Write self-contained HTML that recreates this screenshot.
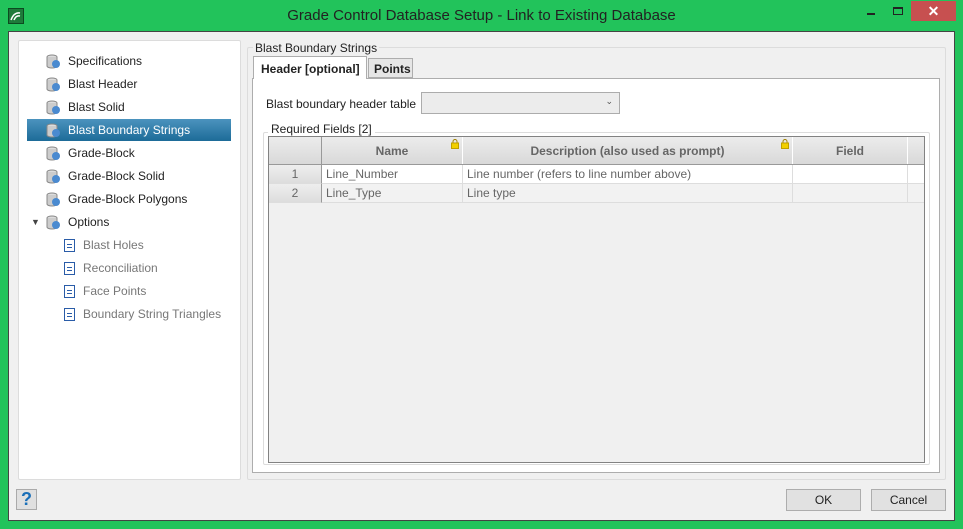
<!DOCTYPE html>
<html><head><style>
*{box-sizing:border-box}
body{margin:0;width:963px;height:529px;background:#22c35b;font-family:"Liberation Sans",sans-serif;font-size:12px;color:#222;position:relative;overflow:hidden}
.a{position:absolute}
.client{left:8px;top:31px;width:947px;height:490px;background:#f0f0f0;border:1px solid #444}
.title{left:0;top:7px;width:963px;text-align:center;font-size:15px;color:#222}
.item{position:absolute;left:27px;width:204px;height:22px;line-height:22px;padding-left:41px;font-size:12px}
.db{position:absolute;left:19px;top:4px;width:15px;height:15px}
.doc{position:absolute;left:37px;top:5px;width:11px;height:13px;border:1px solid #2a5ca8;background:#fff;
 background-image:repeating-linear-gradient(#fff 0 2px,#2a5ca8 2px 3px);background-size:5px 8px;background-position:2px 2px;background-repeat:no-repeat}
.sub{color:#777;padding-left:56px}
.hd{position:absolute;top:0;height:28px;line-height:28px;text-align:center;font-weight:bold;color:#666;background:linear-gradient(#ececec,#d8d8d8);border-right:1px solid #fff}
.cell{position:absolute;height:19px;line-height:19px;padding-left:4px;color:#666;border-right:1px solid #ddd;border-bottom:1px solid #ddd}
.btn{height:22px;background:#e1e1e1;border:1px solid #adadad;text-align:center;line-height:20px}
.lk{position:absolute;right:3px;top:2px}
</style></head><body>
<div class="a" style="left:8px;top:8px;width:16px;height:16px;background:#1e7a3a;border:1px solid #0c4a20"><svg width="14" height="14"><path d="M2 11 Q5 3 11 4 M5 11 Q7 6 11 7" stroke="#fff" fill="none" stroke-width="1.5"/></svg></div>
<div class="a title">Grade Control Database Setup - Link to Existing Database</div>
<div class="a" style="left:867px;top:13px;width:8px;height:2px;background:#222"></div>
<div class="a" style="left:893px;top:7px;width:10px;height:8px;border:1px solid #222;border-top-width:2px"></div>
<div class="a" style="left:911px;top:1px;width:45px;height:20px;background:#c75050;color:#fff;text-align:center;line-height:20px;font-weight:bold;font-size:14px">✕</div>
<div class="a client"></div>
<div class="a" style="left:18px;top:40px;width:223px;height:440px;background:#fff;border:1px solid #dcdcdc;border-radius:2px"></div>
<div class="item" style="top:50px"><svg class="db" viewBox="0 0 15 15"><ellipse cx="6" cy="3" rx="5" ry="2" fill="#ddd" stroke="#888"/><path d="M1 3v9c0 1 2 2 5 2s5-1 5-2V3" fill="#ccc" stroke="#888"/><circle cx="10" cy="10" r="4" fill="#4a8ad0"/></svg>Specifications</div>
<div class="item" style="top:73px"><svg class="db" viewBox="0 0 15 15"><ellipse cx="6" cy="3" rx="5" ry="2" fill="#ddd" stroke="#888"/><path d="M1 3v9c0 1 2 2 5 2s5-1 5-2V3" fill="#ccc" stroke="#888"/><circle cx="10" cy="10" r="4" fill="#4a8ad0"/></svg>Blast Header</div>
<div class="item" style="top:96px"><svg class="db" viewBox="0 0 15 15"><ellipse cx="6" cy="3" rx="5" ry="2" fill="#ddd" stroke="#888"/><path d="M1 3v9c0 1 2 2 5 2s5-1 5-2V3" fill="#ccc" stroke="#888"/><circle cx="10" cy="10" r="4" fill="#4a8ad0"/></svg>Blast Solid</div>
<div class="item" style="top:119px;background:linear-gradient(#4b93be,#1d6b98);color:#fff"><svg class="db" viewBox="0 0 15 15"><ellipse cx="6" cy="3" rx="5" ry="2" fill="#ddd" stroke="#888"/><path d="M1 3v9c0 1 2 2 5 2s5-1 5-2V3" fill="#ccc" stroke="#888"/><circle cx="10" cy="10" r="4" fill="#4a8ad0"/></svg>Blast Boundary Strings</div>
<div class="item" style="top:142px"><svg class="db" viewBox="0 0 15 15"><ellipse cx="6" cy="3" rx="5" ry="2" fill="#ddd" stroke="#888"/><path d="M1 3v9c0 1 2 2 5 2s5-1 5-2V3" fill="#ccc" stroke="#888"/><circle cx="10" cy="10" r="4" fill="#4a8ad0"/></svg>Grade-Block</div>
<div class="item" style="top:165px"><svg class="db" viewBox="0 0 15 15"><ellipse cx="6" cy="3" rx="5" ry="2" fill="#ddd" stroke="#888"/><path d="M1 3v9c0 1 2 2 5 2s5-1 5-2V3" fill="#ccc" stroke="#888"/><circle cx="10" cy="10" r="4" fill="#4a8ad0"/></svg>Grade-Block Solid</div>
<div class="item" style="top:188px"><svg class="db" viewBox="0 0 15 15"><ellipse cx="6" cy="3" rx="5" ry="2" fill="#ddd" stroke="#888"/><path d="M1 3v9c0 1 2 2 5 2s5-1 5-2V3" fill="#ccc" stroke="#888"/><circle cx="10" cy="10" r="4" fill="#4a8ad0"/></svg>Grade-Block Polygons</div>
<div class="item" style="top:211px"><span style="position:absolute;left:4px;font-size:9px;color:#444">▼</span><svg class="db" viewBox="0 0 15 15"><ellipse cx="6" cy="3" rx="5" ry="2" fill="#ddd" stroke="#888"/><path d="M1 3v9c0 1 2 2 5 2s5-1 5-2V3" fill="#ccc" stroke="#888"/><circle cx="10" cy="10" r="4" fill="#4a8ad0"/></svg>Options</div>
<div class="item sub" style="top:234px"><span class="doc"></span>Blast Holes</div>
<div class="item sub" style="top:257px"><span class="doc"></span>Reconciliation</div>
<div class="item sub" style="top:280px"><span class="doc"></span>Face Points</div>
<div class="item sub" style="top:303px;width:220px"><span class="doc"></span>Boundary String Triangles</div>

<div class="a" style="left:247px;top:47px;width:699px;height:433px;border:1px solid #dcdcdc;border-radius:2px"></div>
<div class="a" style="left:253px;top:41px;background:#f0f0f0;padding:0 2px">Blast Boundary Strings</div>
<div class="a" style="left:252px;top:78px;width:688px;height:395px;background:#fff;border:1px solid #adadad"></div>
<div class="a" style="left:253px;top:56px;width:114px;height:23px;background:#fff;border:1px solid #adadad;border-bottom:none;font-weight:bold;padding:5px 0 0 7px">Header [optional]</div>
<div class="a" style="left:368px;top:58px;width:45px;height:20px;background:#e6e6e6;border:1px solid #adadad;font-weight:bold;padding:3px 0 0 5px">Points</div>
<div class="a" style="left:266px;top:97px">Blast boundary header table</div>
<div class="a" style="left:421px;top:92px;width:199px;height:22px;background:#ececec;border:1px solid #acacac"><span style="position:absolute;right:6px;top:3px;font-size:9px;color:#555">⌄</span></div>
<div class="a" style="left:263px;top:132px;width:667px;height:333px;border:1px solid #dcdcdc;border-radius:2px"></div>
<div class="a" style="left:268px;top:122px;background:#fff;padding:0 3px">Required Fields [2]</div>
<div class="a" style="left:268px;top:136px;width:657px;height:327px;background:#f0f0f0;border:1px solid #828282">
 <div class="hd" style="left:0;width:53px;border-right:1px solid #999"></div>
 <div class="hd" style="left:53px;width:141px">Name<svg class="lk" width="8" height="10" viewBox="0 0 8 10"><path d="M2 4V2.5a2 2 0 0 1 4 0V4" stroke="#a08000" fill="none"/><rect x="0.5" y="4" width="7" height="5.5" fill="#f2d000" stroke="#c0a000"/></svg></div>
 <div class="hd" style="left:194px;width:330px">Description (also used as prompt)<svg class="lk" width="8" height="10" viewBox="0 0 8 10"><path d="M2 4V2.5a2 2 0 0 1 4 0V4" stroke="#a08000" fill="none"/><rect x="0.5" y="4" width="7" height="5.5" fill="#f2d000" stroke="#c0a000"/></svg></div>
 <div class="hd" style="left:524px;width:115px">Field</div>
 <div class="hd" style="left:639px;width:16px;border-right:none"></div>
 <div class="a" style="left:0;top:27px;width:655px;height:1px;background:#999"></div>
 <div class="cell" style="top:28px;left:0;width:53px;background:linear-gradient(#eee,#ddd);text-align:center;padding:0;border-right:1px solid #999">1</div>
 <div class="cell" style="top:28px;left:53px;width:141px;background:#fff">Line_Number</div>
 <div class="cell" style="top:28px;left:194px;width:330px;background:#fff">Line number (refers to line number above)</div>
 <div class="cell" style="top:28px;left:524px;width:115px;background:#fff"></div>
 <div class="cell" style="top:28px;left:639px;width:16px;background:#fff;border-right:none"></div>
 <div class="cell" style="top:47px;left:0;width:53px;background:linear-gradient(#eee,#ddd);text-align:center;padding:0;border-right:1px solid #999">2</div>
 <div class="cell" style="top:47px;left:53px;width:141px;background:#f2f2f2">Line_Type</div>
 <div class="cell" style="top:47px;left:194px;width:330px;background:#f2f2f2">Line type</div>
 <div class="cell" style="top:47px;left:524px;width:115px;background:#f2f2f2"></div>
 <div class="cell" style="top:47px;left:639px;width:16px;background:#f2f2f2;border-right:none"></div>
</div>
<div class="a" style="left:16px;top:489px;width:21px;height:21px;background:#e0e0e0;border:1px solid #aaa;color:#1a6fb8;font-weight:bold;font-size:18px;text-align:center;line-height:19px">?</div>
<div class="a btn" style="left:786px;top:489px;width:75px">OK</div>
<div class="a btn" style="left:871px;top:489px;width:75px">Cancel</div>
</body></html>
